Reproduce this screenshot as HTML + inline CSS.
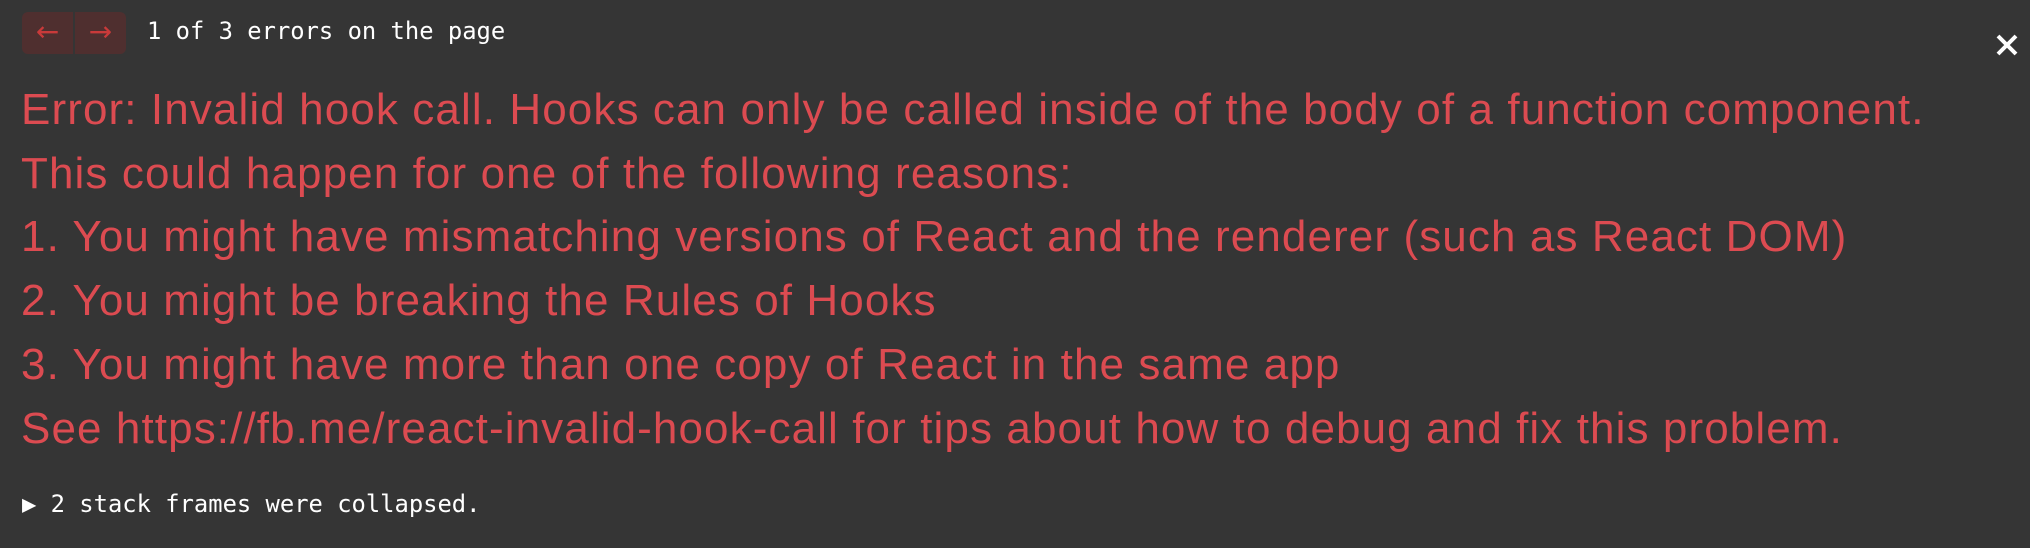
<!DOCTYPE html>
<html><head><meta charset="utf-8"><style>
html,body{margin:0;padding:0;background:#353535;width:2030px;height:548px;overflow:hidden;position:relative}
.btns{position:absolute;left:22px;top:12px;width:104px;height:42px;background:#4f2f2f;border-radius:6px;overflow:hidden}
.btns span{position:absolute;top:0;height:42px;width:51px;color:#c93a3a;font:28px "DejaVu Sans",sans-serif;line-height:40px;text-align:center}
.sep{position:absolute;left:51px;top:0;width:2px;height:42px;background:#353535}
.mono{font-family:"DejaVu Sans Mono","Liberation Mono",monospace;color:#fff;font-size:23.8px;position:absolute;white-space:pre}
.msg{position:absolute;left:21px;top:78px;color:#dc4b51;font-family:"Liberation Sans",Arial,sans-serif;font-size:44px;letter-spacing:1.1px;line-height:63.7px;white-space:pre}
.x{position:absolute;left:1993px;top:31px}
</style></head><body>
<div class="btns"><span style="left:0">←</span><div class="sep"></div><span style="left:53px">→</span></div>
<div class="mono" style="left:147px;top:17px">1 of 3 errors on the page</div>
<svg class="x" width="28" height="28" viewBox="0 0 28 28"><path d="M5 5L23 23M23 5L5 23" stroke="#fff" stroke-width="4"/></svg>
<div class="msg">Error: Invalid hook call. Hooks can only be called inside of the body of a function component.
This could happen for one of the following reasons:
1. You might have mismatching versions of React and the renderer (such as React DOM)
2. You might be breaking the Rules of Hooks
3. You might have more than one copy of React in the same app
See https://fb.me/react-invalid-hook-call for tips about how to debug and fix this problem.</div>
<div class="mono" style="left:22px;top:490px">▶ 2 stack frames were collapsed.</div>
</body></html>
